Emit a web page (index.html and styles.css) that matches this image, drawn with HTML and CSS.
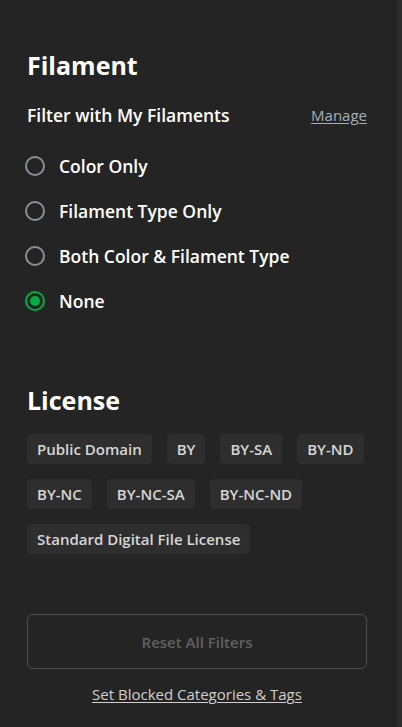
FILE: index.html
```html
<!DOCTYPE html>
<html>
<head>
<meta charset="utf-8">
<link rel="stylesheet" href="styles.css">
</head>
<body>
<div class="page">
  <main class="panel">
    <h2 class="heading">Filament</h2>
    <div class="filter-row">
      <span class="filter-label">Filter with My Filaments</span>
      <a class="manage">Manage</a>
    </div>
    <ul class="radios">
      <li class="radio"><span class="dot"></span><span class="radio-label">Color Only</span></li>
      <li class="radio"><span class="dot"></span><span class="radio-label">Filament Type Only</span></li>
      <li class="radio"><span class="dot"></span><span class="radio-label">Both Color &amp; Filament Type</span></li>
      <li class="radio checked"><span class="dot"></span><span class="radio-label">None</span></li>
    </ul>
    <h2 class="heading license">License</h2>
    <div class="tags">
      <span class="tag">Public Domain</span>
      <span class="tag">BY</span>
      <span class="tag">BY-SA</span>
      <span class="tag">BY-ND</span>
      <span class="tag">BY-NC</span>
      <span class="tag">BY-NC-SA</span>
      <span class="tag">BY-NC-ND</span>
      <span class="tag">Standard Digital File License</span>
    </div>
    <button class="reset">Reset All Filters</button>
    <div class="blocked"><a class="blocked-link">Set Blocked Categories &amp; Tags</a></div>
  </main>
  <div class="scrollbar"></div>
</div>
</body>
</html>
```
FILE: styles.css
```css
* { box-sizing: border-box; }
html, body {
  margin: 0;
  padding: 0;
  height: 100%;
  background: #242424;
  font-family: "Open Sans", "Noto Sans", sans-serif;
  color: #ffffff;
}
.page {
  display: flex;
  height: 727px;
  overflow: hidden;
}
.panel {
  width: 397px;
  padding: 49px 30px 0 27px;
}
.scrollbar {
  width: 5px;
  background: #2b2b2b;
}
.heading {
  margin: 0;
  font-size: 25px;
  line-height: 32px;
  font-weight: 700;
}
.filter-row {
  margin-top: 22px;
  display: flex;
  justify-content: space-between;
  align-items: center;
  height: 24px;
}
.filter-label {
  font-size: 17.5px;
  font-weight: 600;
}
.manage {
  font-size: 15px;
  color: #a7aeb6;
  text-decoration: underline;
  text-underline-offset: 2px;
}
.radios {
  list-style: none;
  margin: 16.5px 0 0 -2px;
  padding: 0;
}
.radio {
  display: flex;
  align-items: center;
  height: 45px;
  gap: 14px;
}
.dot {
  width: 20px;
  height: 20px;
  border: 2px solid #8a9098;
  border-radius: 50%;
  display: flex;
  align-items: center;
  justify-content: center;
  flex: none;
}
.checked .dot {
  border-color: #00ae42;
}
.checked .dot::after {
  content: "";
  width: 10px;
  height: 10px;
  border-radius: 50%;
  background: #00ae42;
}
.radio-label {
  font-size: 17.5px;
  font-weight: 600;
}
.license {
  margin-top: 60.5px;
}
.tags {
  margin-top: 18px;
  display: flex;
  flex-wrap: wrap;
  gap: 15px;
}
.tag {
  height: 30px;
  line-height: 30px;
  padding: 0 10px;
  background: #2e2e2e;
  border-radius: 4px;
  font-size: 15px;
  font-weight: 600;
  color: #d6d6d6;
}
.reset {
  display: block;
  width: 340px;
  height: 55px;
  margin-top: 60px;
  background: transparent;
  border: 1px solid #4e4e4e;
  border-radius: 6px;
  font-family: inherit;
  font-size: 15px;
  font-weight: 600;
  color: #606060;
}
.blocked {
  margin-top: 15px;
  width: 340px;
  text-align: center;
  line-height: 20px;
}
.blocked-link {
  font-size: 15px;
  color: #d0d0d0;
  text-decoration: underline;
  text-underline-offset: 2px;
}
```
